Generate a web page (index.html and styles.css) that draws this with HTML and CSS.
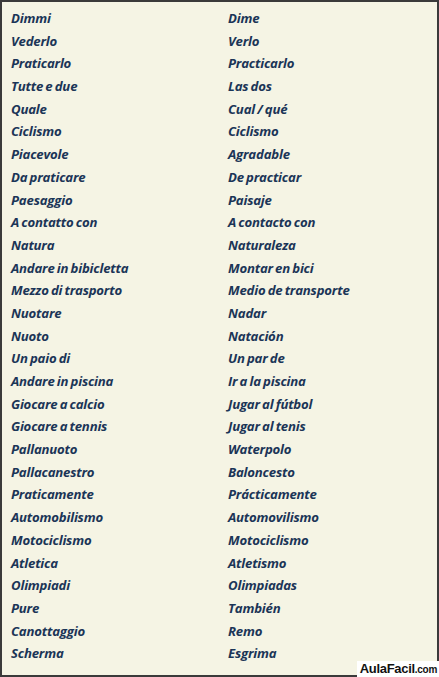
FILE: index.html
```html
<!DOCTYPE html>
<html>
<head>
<meta charset="utf-8">
<link rel="stylesheet" href="styles.css">
</head>
<body>
<div class="card">
  <div class="grid">
    <div>Dimmi</div><div>Dime</div>
    <div>Vederlo</div><div>Verlo</div>
    <div>Praticarlo</div><div>Practicarlo</div>
    <div>Tutte e due</div><div>Las dos</div>
    <div>Quale</div><div>Cual / qué</div>
    <div>Ciclismo</div><div>Ciclismo</div>
    <div>Piacevole</div><div>Agradable</div>
    <div>Da praticare</div><div>De practicar</div>
    <div>Paesaggio</div><div>Paisaje</div>
    <div>A contatto con</div><div>A contacto con</div>
    <div>Natura</div><div>Naturaleza</div>
    <div>Andare in bibicletta</div><div>Montar en bici</div>
    <div>Mezzo di trasporto</div><div>Medio de transporte</div>
    <div>Nuotare</div><div>Nadar</div>
    <div>Nuoto</div><div>Natación</div>
    <div>Un paio di</div><div>Un par de</div>
    <div>Andare in piscina</div><div>Ir a la piscina</div>
    <div>Giocare a calcio</div><div>Jugar al fútbol</div>
    <div>Giocare a tennis</div><div>Jugar al tenis</div>
    <div>Pallanuoto</div><div>Waterpolo</div>
    <div>Pallacanestro</div><div>Baloncesto</div>
    <div>Praticamente</div><div>Prácticamente</div>
    <div>Automobilismo</div><div>Automovilismo</div>
    <div>Motociclismo</div><div>Motociclismo</div>
    <div>Atletica</div><div>Atletismo</div>
    <div>Olimpiadi</div><div>Olimpiadas</div>
    <div>Pure</div><div>También</div>
    <div>Canottaggio</div><div>Remo</div>
    <div>Scherma</div><div>Esgrima</div>
  </div>
  <div class="logo">AulaFacil<span class="dom">.com</span></div>
</div>
</body>
</html>
```
FILE: styles.css
```css
html, body {
  margin: 0;
  padding: 0;
  background: #ffffff;
}
.card {
  position: relative;
  box-sizing: border-box;
  width: 439px;
  height: 677px;
  background: #f5f4e4;
  border: 2px solid #3a3a3a;
  padding: 5px 0 0 9px;
}
.grid {
  display: grid;
  grid-template-columns: 217px 1fr;
  font-family: "Open Sans", sans-serif;
  font-weight: bold;
  font-style: italic;
  font-size: 13.2px;
  letter-spacing: -0.2px;
  word-spacing: -1px;
  line-height: 22.68px;
  color: #1b3557;
}
.logo {
  position: absolute;
  right: -2px;
  bottom: -2px;
  background: #ffffff;
  padding: 0 2px 0 3px;
  font-family: "Liberation Sans", sans-serif;
  font-weight: bold;
  font-size: 13px;
  letter-spacing: -0.3px;
  line-height: 15px;
  color: #111111;
}
.logo .dom {
  font-size: 10px;
}
```
